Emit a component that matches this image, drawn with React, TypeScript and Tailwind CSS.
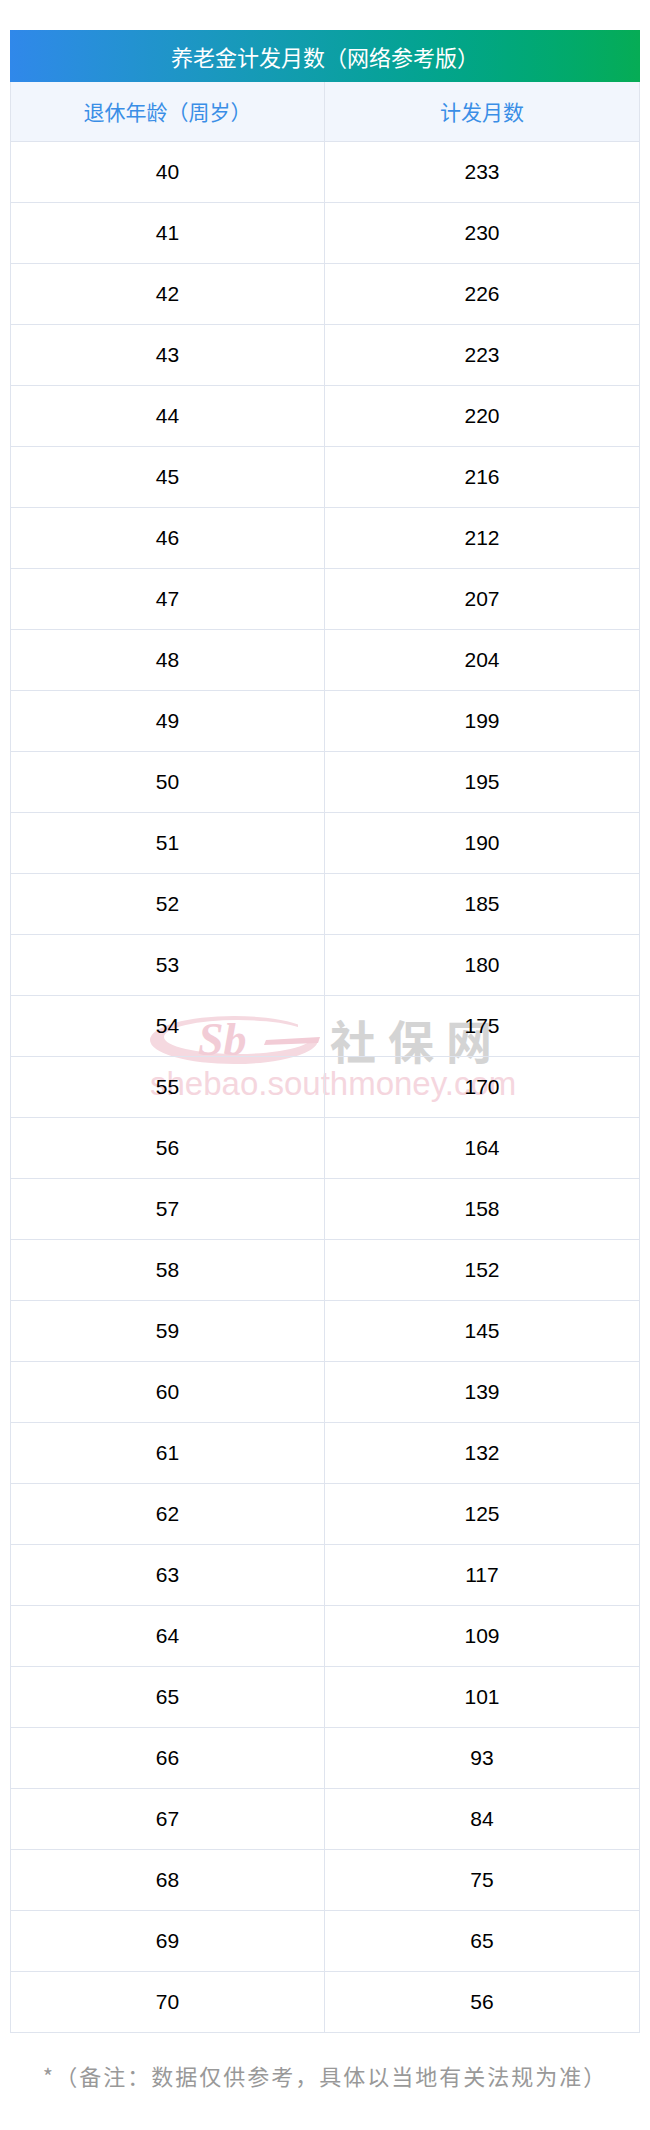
const rows: [number, number][] = [
  [40, 233], [41, 230], [42, 226], [43, 223], [44, 220], [45, 216], [46, 212],
  [47, 207], [48, 204], [49, 199], [50, 195], [51, 190], [52, 185], [53, 180],
  [54, 175], [55, 170], [56, 164], [57, 158], [58, 152], [59, 145], [60, 139],
  [61, 132], [62, 125], [63, 117], [64, 109], [65, 101], [66, 93], [67, 84],
  [68, 75], [69, 65], [70, 56],
];

const cjk = "font-['Noto_Sans_CJK_SC',_'Noto_Sans',_sans-serif]";

function Watermark() {
  return (
    <div className="pointer-events-none absolute left-[130px] top-[983px] w-[390px]">
      <div className="flex items-center">
        <svg width="180" height="52" viewBox="0 0 180 52" className="ml-[8px] overflow-visible">
          <path
            fillRule="evenodd"
            d="M2 27 A84 24 0 1 0 170 27 A84 24 0 1 0 2 27 Z M16 24 A74 17 0 1 0 164 24 A74 17 0 1 0 16 24 Z"
            fill="#f5d9e0"
          />
          <rect x="150" y="4" width="30" height="22" fill="white" />
          <text
            x="50"
            y="42"
            fontFamily="'Liberation Serif', serif"
            fontStyle="italic"
            fontWeight="bold"
            fontSize="46"
            fill="#f2ccd6"
          >
            Sb
          </text>
          <path d="M118 27 L172 24 L170 30 L116 32 Z" fill="#f2ccd6" />
        </svg>
        <span className={`${cjk} ml-[2px] text-[46px] font-bold leading-none tracking-[12px] text-[#d4d4d4]`}>
          社保网
        </span>
      </div>
      <div className="mt-[2px] pl-[10px] font-['Liberation_Sans',_Arial,_sans-serif] text-[33px] leading-none text-[#f5d6de]">
        shebao.southmoney.com
      </div>
    </div>
  );
}

export default function App() {
  return (
    <div className="min-h-[2130px] bg-white pt-[30px]">
      <div className="relative mx-[10px] w-[630px]">
        <div
          className={`${cjk} flex h-[52px] items-center justify-center bg-gradient-to-r from-[#3088ea] to-[#06ac55] text-[22px] text-white`}
        >
          养老金计发月数（网络参考版）
        </div>
        <div className="border-x border-[#dfe4ee]">
          <div className={`${cjk} grid h-[60px] grid-cols-2 border-b border-[#dfe4ee] bg-[#f2f6fd] text-[21px] text-[#3a8ee6]`}>
            <div className="flex items-center justify-center border-r border-[#dfe4ee]">退休年龄（周岁）</div>
            <div className="flex items-center justify-center">计发月数</div>
          </div>
          {rows.map(([age, months]) => (
            <div
              key={age}
              className="relative z-10 grid h-[61px] grid-cols-2 border-b border-[#dfe4ee] font-['Liberation_Sans',_Arial,_sans-serif] text-[21px] text-black"
            >
              <div className="flex items-center justify-center border-r border-[#dfe4ee]">{age}</div>
              <div className="flex items-center justify-center">{months}</div>
            </div>
          ))}
        </div>
        <Watermark />
      </div>
      <p className={`${cjk} mt-[26px] text-center text-[22px] tracking-[2px] text-[#999999]`}>
        *（备注：数据仅供参考，具体以当地有关法规为准）
      </p>
    </div>
  );
}
